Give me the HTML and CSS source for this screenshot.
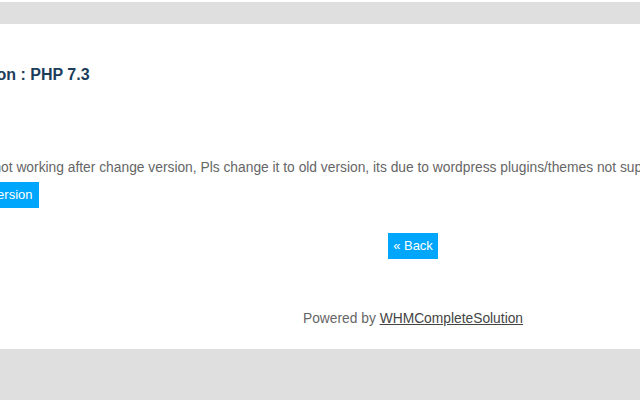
FILE: index.html
```html
<!DOCTYPE html>
<html lang="en">
<head>
<meta charset="utf-8">
<title>PHP Version</title>
<link rel="stylesheet" href="styles.css">
</head>
<body>
<div class="topbar"></div>
<main class="panel">
  <div class="content">
    <h2 class="title">Current PHP Version : PHP 7.3</h2>
    <p class="note">Note: If your website is not working after change version, Pls change it to old version, its due to wordpress plugins/themes not supporting new PHP version.</p>
    <div class="actions">
      <button class="btn btn-change" type="button">Change Version</button>
    </div>
    <div class="back-row">
      <a class="btn btn-back" href="#">&laquo; Back</a>
    </div>
    <p class="powered">Powered by <a class="powered-link" href="#">WHMCompleteSolution</a></p>
  </div>
</main>
<div class="bottombar"></div>
</body>
</html>
```

FILE: styles.css
```css
html, body {
  margin: 0;
  padding: 0;
  overflow: hidden;
}
body {
  background: #ffffff;
  padding-top: 2px;
  font-family: "Liberation Sans", Arial, sans-serif;
}
.topbar {
  height: 22px;
  background: #dfdfdf;
}
.panel {
  height: 325px;
  background: #ffffff;
  overflow: hidden;
}
.content {
  width: 1112px;
  margin-left: -143px;
  padding-top: 42px;
  display: flex;
  flex-direction: column;
}
.title {
  margin: 0 0 0 2px;
  font-size: 16px;
  font-weight: bold;
  color: #1b3d5b;
  line-height: 18px;
}
.note {
  margin: 76px 0 0 -7px;
  font-size: 13.8px;
  color: #666666;
  white-space: nowrap;
  line-height: 16px;
}
.actions {
  margin-top: 6px;
  padding-left: 77px;
  display: flex;
}
.btn {
  display: inline-block;
  background: #00a6fb;
  color: #ffffff;
  border: 0;
  font-family: "Liberation Sans", Arial, sans-serif;
  font-size: 13px;
  line-height: 16px;
  padding: 5px 6px;
  text-decoration: none;
}
.btn-back {
  padding: 5px 5px;
}
.back-row {
  margin-top: 25px;
  display: flex;
  justify-content: center;
}
.powered {
  margin: 52px 0 0;
  text-align: center;
  font-size: 13.8px;
  line-height: 16px;
  color: #666666;
}
.powered-link {
  color: #444444;
  text-decoration: underline;
}
.bottombar {
  height: 60px;
  background: #dfdfdf;
}
```
